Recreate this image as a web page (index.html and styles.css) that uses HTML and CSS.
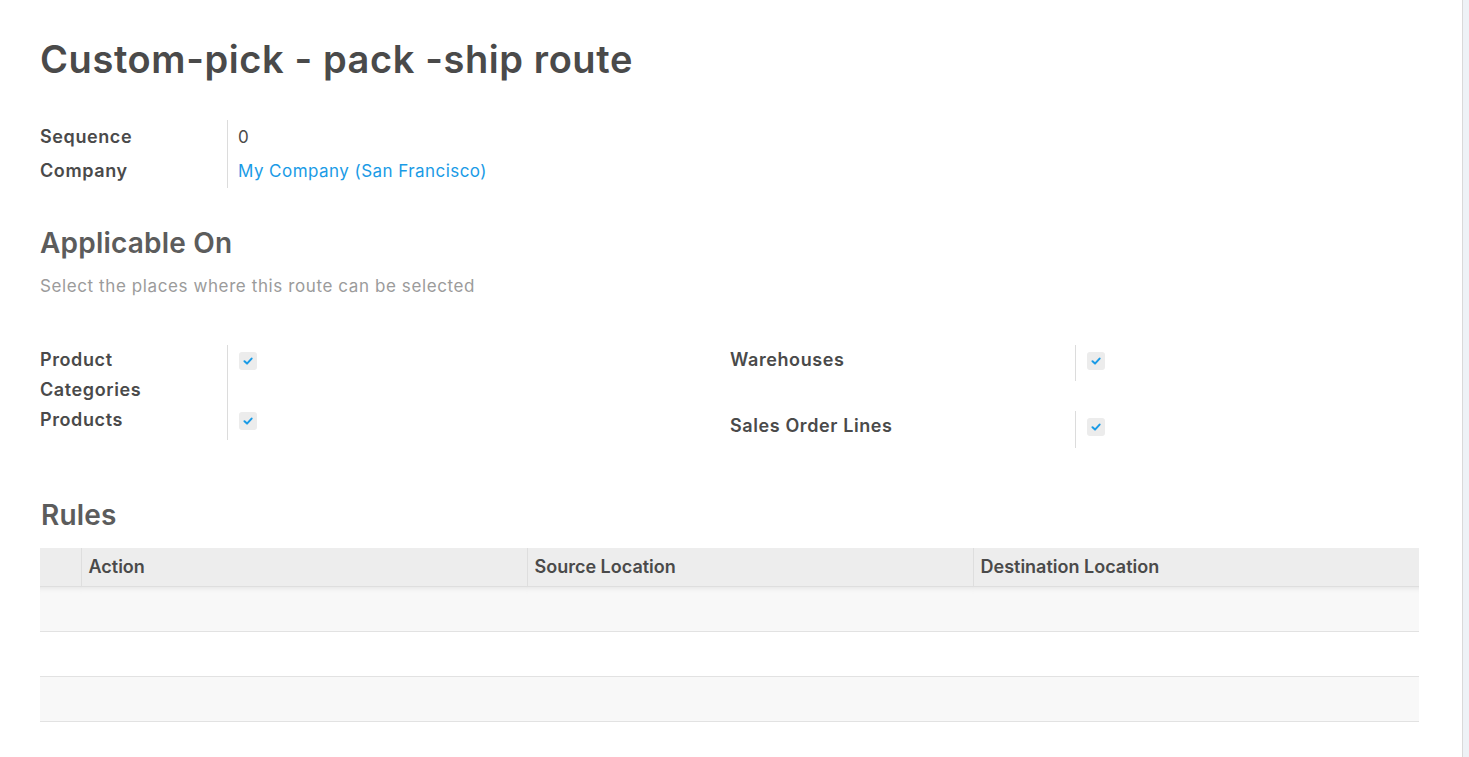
FILE: index.html
```html
<!DOCTYPE html>
<html lang="en">
<head>
<meta charset="utf-8">
<title>Custom-pick - pack -ship route</title>
<link rel="stylesheet" href="styles.css">
</head>
<body>
<div class="page">
  <main class="sheet">
    <h1 class="title">Custom-pick - pack -ship route</h1>

    <div class="fields">
      <div class="flabel">Sequence</div>
      <div class="fvalue">0</div>
      <div class="flabel">Company</div>
      <div class="fvalue"><a class="link" href="#">My Company (San Francisco)</a></div>
    </div>

    <h2 class="section">Applicable On</h2>
    <p class="hint">Select the places where this route can be selected</p>

    <div class="applicable">
      <div class="group group-left">
        <div class="row row-tall">
          <div class="glabel">Product Categories</div>
          <div class="gvalue"><span class="check"><svg viewBox="0 0 10 10" width="10" height="10"><path d="M1.5 5.3 L4 7.6 L8.6 2.6" fill="none" stroke="#1a9be6" stroke-width="2" stroke-linecap="round" stroke-linejoin="round"/></svg></span></div>
        </div>
        <div class="row row-short">
          <div class="glabel">Products</div>
          <div class="gvalue"><span class="check"><svg viewBox="0 0 10 10" width="10" height="10"><path d="M1.5 5.3 L4 7.6 L8.6 2.6" fill="none" stroke="#1a9be6" stroke-width="2" stroke-linecap="round" stroke-linejoin="round"/></svg></span></div>
        </div>
      </div>
      <div class="group group-right">
        <div class="row rrow">
          <div class="glabel wide">Warehouses</div>
          <div class="gvalue"><span class="check"><svg viewBox="0 0 10 10" width="10" height="10"><path d="M1.5 5.3 L4 7.6 L8.6 2.6" fill="none" stroke="#1a9be6" stroke-width="2" stroke-linecap="round" stroke-linejoin="round"/></svg></span></div>
        </div>
        <div class="row rrow">
          <div class="glabel wide">Sales Order Lines</div>
          <div class="gvalue"><span class="check"><svg viewBox="0 0 10 10" width="10" height="10"><path d="M1.5 5.3 L4 7.6 L8.6 2.6" fill="none" stroke="#1a9be6" stroke-width="2" stroke-linecap="round" stroke-linejoin="round"/></svg></span></div>
        </div>
      </div>
    </div>

    <h2 class="section rules-title">Rules</h2>

    <table class="rules">
      <thead>
        <tr>
          <th class="handle"></th>
          <th>Action</th>
          <th>Source Location</th>
          <th>Destination Location</th>
        </tr>
      </thead>
      <tbody>
        <tr class="first"><td></td><td></td><td></td><td></td></tr>
        <tr><td></td><td></td><td></td><td></td></tr>
        <tr><td></td><td></td><td></td><td></td></tr>
      </tbody>
    </table>
  </main>
  <div class="rail"></div>
</div>
</body>
</html>
```

FILE: styles.css
```css
* { box-sizing: border-box; }

html, body {
  margin: 0;
  padding: 0;
  background: #ffffff;
}

body {
  font-family: "Inter", "Noto Sans", "Liberation Sans", sans-serif;
  color: #4c4c4c;
}

.page {
  display: flex;
  width: 1469px;
  min-height: 757px;
}

.sheet {
  flex: 1;
  padding: 34px 43px 0 40px;
}

.rail {
  width: 7px;
  border-left: 1px solid #d9d9d9;
  background: #eef2f6;
}

.title {
  margin: 0;
  font-size: 38px;
  line-height: 50px;
  font-weight: 600;
  color: #4a4a4a;
  letter-spacing: 0.6px;
}

.fields {
  display: grid;
  grid-template-columns: 187px 1fr;
  margin-top: 36px;
}

.flabel {
  height: 34px;
  line-height: 34px;
  font-size: 18px;
  font-weight: 600;
  color: #4a4a4a;
  letter-spacing: 0.6px;
}

.fvalue {
  height: 34px;
  line-height: 34px;
  font-size: 17px;
  border-left: 1px solid #dcdcdc;
  padding-left: 10px;
  color: #4a4a4a;
  letter-spacing: 0.45px;
}

.link {
  color: #1a9be6;
  text-decoration: none;
}

.section {
  margin: 0;
  font-size: 28px;
  font-weight: 600;
  color: #5c5c5c;
  line-height: 40px;
  letter-spacing: 0.2px;
}

.fields + .section {
  margin-top: 35px;
}

.hint {
  margin: 11px 0 0;
  font-size: 17px;
  line-height: 24px;
  color: #9b9b9b;
  letter-spacing: 0.6px;
}

.applicable {
  display: flex;
  margin-top: 47px;
}

.group-left {
  width: 690px;
}

.group-right {
  flex: 1;
  display: flex;
  flex-direction: column;
  gap: 30px;
}

.row {
  display: flex;
}

.glabel {
  width: 187px;
  padding-right: 30px;
  font-size: 18px;
  font-weight: 600;
  line-height: 30px;
  color: #4a4a4a;
  letter-spacing: 0.6px;
}

.glabel.wide {
  width: 345px;
  padding-right: 10px;
}

.gvalue {
  flex: 1;
  border-left: 1px solid #dcdcdc;
  padding-left: 11px;
  padding-top: 5px;
}

.row-tall { height: 60px; }
.row-short { height: 35px; }
.rrow { height: 36px; }
.group-right .rrow + .rrow { height: 37px; }

.check {
  display: inline-flex;
  align-items: center;
  justify-content: center;
  width: 18px;
  height: 18px;
  border-radius: 3px;
  background: #ececec;
}

.rules-title {
  margin-top: 47px;
  padding-left: 1px;
}

.rules {
  width: 1379px;
  margin-top: 13px;
  border-collapse: collapse;
  table-layout: fixed;
}

.rules th {
  height: 38px;
  background: #ededed;
  text-align: left;
  font-size: 18px;
  font-weight: 600;
  color: #4a4a4a;
  padding: 0 7px;
  border-left: 1px solid #dedede;
  border-bottom: 1px solid #dedede;
}

.rules th:first-child {
  border-left: none;
}

.rules th.handle {
  width: 41px;
}

.rules td {
  height: 45px;
  border-bottom: 1px solid #e2e2e2;
  padding: 0;
}

.rules tbody tr:nth-child(odd) td {
  background: #f8f8f8;
}

.rules tbody tr.first td {
  box-shadow: inset 0 6px 6px -6px rgba(0, 0, 0, 0.12);
}
```
